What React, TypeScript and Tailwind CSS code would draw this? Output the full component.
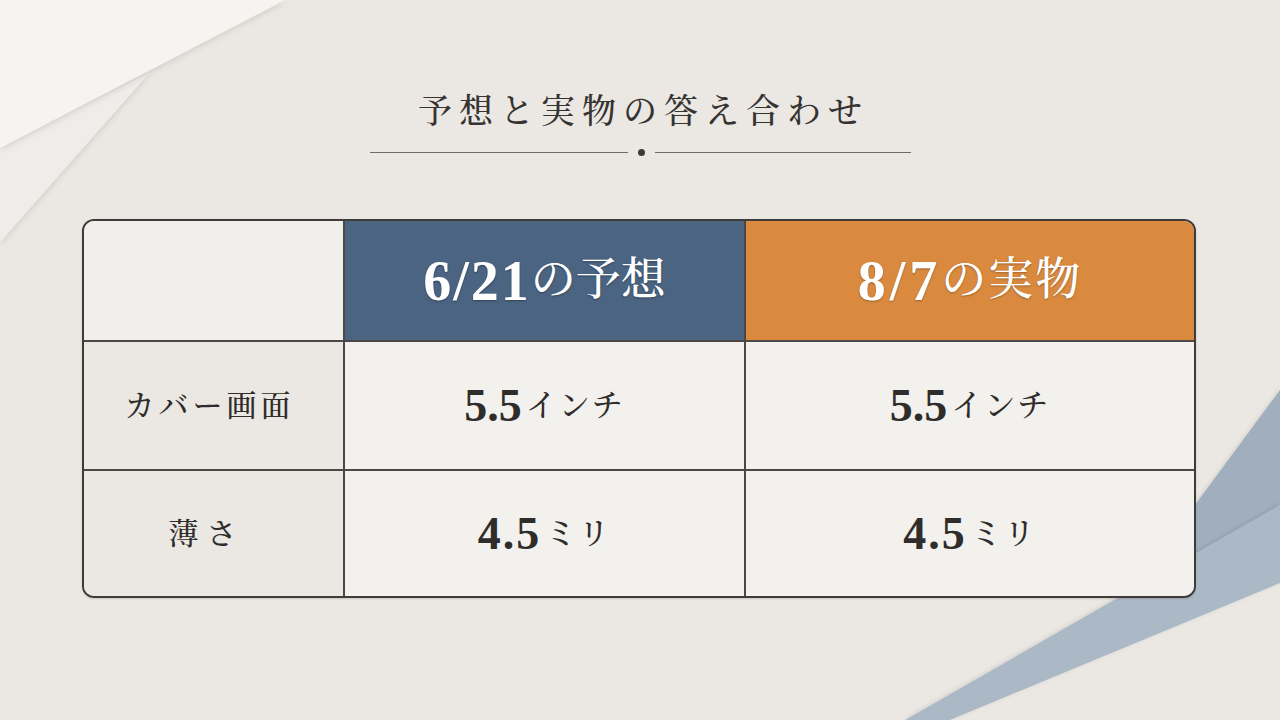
import React from "react";

const serif =
  '"Liberation Serif", "Noto Serif CJK JP", "Noto Serif JP", "Noto Sans CJK JP", serif';

function Decorations() {
  return (
    <svg
      className="absolute inset-0"
      width="1280"
      height="720"
      viewBox="0 0 1280 720"
    >
      <defs>
        <filter id="sh" x="-20%" y="-20%" width="140%" height="140%">
          <feDropShadow dx="0" dy="2" stdDeviation="3" floodColor="#000" floodOpacity="0.12" />
        </filter>
        <filter id="sh2" x="-20%" y="-20%" width="140%" height="140%">
          <feDropShadow dx="0" dy="-1" stdDeviation="2" floodColor="#000" floodOpacity="0.12" />
        </filter>
      </defs>
      <polygon points="0,148 150,72 0,242" fill="#efede9" filter="url(#sh)" />
      <polygon points="0,0 285,0 0,148" fill="#f5f4f1" filter="url(#sh)" />
      <polygon points="1280,390 1280,508 1132,590" fill="#a0aebd" filter="url(#sh2)" />
      <polygon points="1280,505 1280,583 950,720 905,720" fill="#abb8c6" filter="url(#sh2)" />
    </svg>
  );
}

export default function App() {
  return (
    <div
      className="relative w-[1280px] h-[720px] overflow-hidden bg-[#ebe8e3]"
      style={{ fontFamily: serif }}
    >
      <Decorations />
      <div className="relative flex flex-col pt-[92px]">
        <h1 className="text-center text-[34px] leading-[40px] tracking-[7px] pl-[7px] text-[#363432] font-medium">
          予想と実物の答え合わせ
        </h1>
        <div className="mt-[16px] h-[8px] flex items-center justify-center">
          <div className="w-[258px] h-px bg-[#6e6b68]" />
          <div className="mx-[10px] w-[7px] h-[7px] rounded-full bg-[#3c3a38]" />
          <div className="w-[256px] h-px bg-[#6e6b68]" />
        </div>
        <div className="mt-[63px] ml-[82px] w-[1114px] h-[379px] border-2 border-[#3e3b39] rounded-[12px] overflow-hidden grid grid-cols-[261px_401px_448px] grid-rows-[121px_129px_125px] shadow-[0_1px_2px_rgba(0,0,0,0.15)]">
          {/* header row */}
          <div className="bg-[#f1efeb] border-r-2 border-b-2 border-[#4a4745]" />
          <div className="bg-[#4a6482] border-r-2 border-b-2 border-[#4a4745] flex items-center justify-center text-white [text-shadow:0_1px_2px_rgba(0,0,0,0.35)]">
            <span className="text-[56px] font-bold leading-none tracking-[2px]">6/21</span>
            <span className="text-[45px] leading-none font-medium">の予想</span>
          </div>
          <div className="bg-[#d98a3f] border-b-2 border-[#4a4745] flex items-center justify-center text-white [text-shadow:0_1px_2px_rgba(0,0,0,0.3)]">
            <span className="text-[56px] font-bold leading-none tracking-[4px]">8/7</span>
            <span className="text-[45px] leading-none font-medium tracking-[2px]">の実物</span>
          </div>

          {/* row 2 */}
          <div className="bg-[#ebe8e3] border-r-2 border-b-2 border-[#4a4745] flex items-center justify-center text-[30px] tracking-[4px] pr-[8px] text-[#2f2d2b] font-medium">
            カバー画面
          </div>
          <div className="bg-[#f3f1ed] border-r-2 border-b-2 border-[#4a4745] flex items-center justify-center text-[#2f2d2b]">
            <span className="text-[46px] font-bold leading-none">5.5</span>
            <span className="text-[31px] leading-none font-medium tracking-[2px] ml-[4px]">インチ</span>
          </div>
          <div className="bg-[#f3f1ed] border-b-2 border-[#4a4745] flex items-center justify-center text-[#2f2d2b]">
            <span className="text-[46px] font-bold leading-none">5.5</span>
            <span className="text-[31px] leading-none font-medium tracking-[2px] ml-[4px]">インチ</span>
          </div>

          {/* row 3 */}
          <div className="bg-[#ebe8e3] border-r-2 border-[#4a4745] flex items-center justify-center text-[30px] tracking-[8px] pr-[14px] text-[#2f2d2b] font-medium">
            薄さ
          </div>
          <div className="bg-[#f3f1ed] border-r-2 border-[#4a4745] flex items-center justify-center text-[#2f2d2b]">
            <span className="text-[46px] font-bold leading-none tracking-[2px]">4.5</span>
            <span className="text-[31px] leading-none font-medium tracking-[2px] ml-[4px]">ミリ</span>
          </div>
          <div className="bg-[#f3f1ed] flex items-center justify-center text-[#2f2d2b]">
            <span className="text-[46px] font-bold leading-none tracking-[2px]">4.5</span>
            <span className="text-[31px] leading-none font-medium tracking-[2px] ml-[4px]">ミリ</span>
          </div>
        </div>
      </div>
    </div>
  );
}
